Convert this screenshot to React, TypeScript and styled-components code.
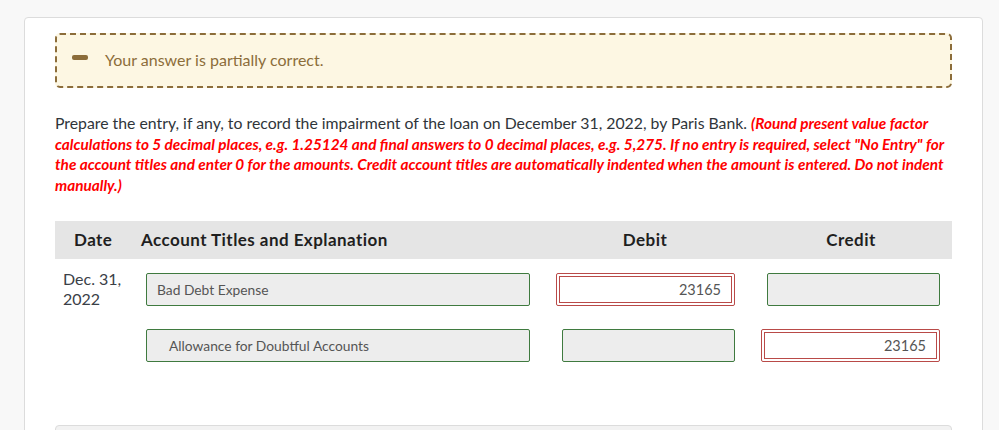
import React from "react";
import styled, { createGlobalStyle } from "styled-components";

const Global = createGlobalStyle`
  html, body { margin: 0; padding: 0; background: #f8f8f8; }
  body { font-family: Lato, "Open Sans", "Liberation Sans", sans-serif; color: #333; }
  * { box-sizing: border-box; }
`;

const Page = styled.div`
  padding: 17px 16px 0 24px;
  height: 430px;
  overflow: hidden;
`;

const Card = styled.div`
  background: #fff;
  border: 1px solid #dcdcdc;
  border-radius: 4px;
  padding: 15px 30px 0 30px;
  min-height: 500px;
`;

const Alert = styled.div`
  display: flex;
  align-items: center;
  gap: 17px;
  height: 55px;
  padding: 0 15px 2px;
  background: #fdf7e3;
  border: 2px dashed #8c6d3a;
  border-radius: 5px;
  color: #8c6d3a;
  font-size: 16px;
`;

const MinusIcon = styled.span`
  display: block;
  width: 16px;
  height: 5px;
  border-radius: 2px;
  background: #8c6d3a;
  margin-top: -4px;
`;

const Prompt = styled.p`
  margin: 25px 0 0;
  font-size: 15.8px;
  line-height: 20.7px;
  color: #2f353a;
`;

const Note = styled.em`
  color: #ff0000;
  font-size: 15.35px;
  line-height: 1;
  font-weight: 700;
  font-style: italic;
`;

const Table = styled.div`
  margin-top: 25px;
  display: grid;
  grid-template-columns: 86px 399px 210px 202px;
`;

const HeadCell = styled.div<{ $align?: string; $pad?: string }>`
  background: #e5e5e5;
  height: 38px;
  display: flex;
  align-items: center;
  justify-content: ${(p) => p.$align || "center"};
  padding: ${(p) => p.$pad || "0"};
  font-size: 17px;
  letter-spacing: 0.45px;
  font-weight: 700;
  color: #1f1f1f;
`;

const DateCell = styled.div`
  padding: 10px 0 0 8px;
  font-size: 16px;
  line-height: 20px;
  color: #3a4047;
`;

const Cell = styled.div<{ $top: number; $padLeft?: number; $padRight?: number }>`
  display: flex;
  justify-content: ${(p) => (p.$padRight !== undefined ? "flex-end" : "flex-start")};
  padding-top: ${(p) => p.$top}px;
  padding-left: ${(p) => p.$padLeft ?? 0}px;
  padding-right: ${(p) => p.$padRight ?? 0}px;
`;

const Field = styled.div<{ $width: number; $indent?: number }>`
  width: ${(p) => p.$width}px;
  height: 33px;
  display: flex;
  align-items: center;
  padding-left: ${(p) => p.$indent ?? 10}px;
  background: #ededed;
  border: 1px solid #3f7a3f;
  border-radius: 2px;
  font-size: 13.8px;
  color: #555;
`;

const WrongOuter = styled.div<{ $width: number }>`
  width: ${(p) => p.$width}px;
  height: 33px;
  padding: 2px;
  border: 1px solid #b94a48;
  border-radius: 2px;
  background: #fff;
`;

const WrongInner = styled.div`
  height: 100%;
  border: 1px solid #b94a48;
  display: flex;
  align-items: center;
  justify-content: flex-end;
  padding-right: 10px;
  font-size: 14.5px;
  color: #555;
`;

const Spacer = styled.div``;

const NextBox = styled.div`
  margin-top: 63px;
  height: 40px;
  background: #f2f2f2;
  border: 1px solid #dcdcdc;
  border-radius: 4px 4px 0 0;
`;

export default function App() {
  return (
    <>
      <Global />
      <Page>
        <Card>
          <Alert>
            <MinusIcon />
            <span>Your answer is partially correct.</span>
          </Alert>
          <Prompt>
            Prepare the entry, if any, to record the impairment of the loan on December 31, 2022, by Paris Bank.{" "}
            <Note>
              (Round present value factor calculations to 5 decimal places, e.g. 1.25124 and final answers to 0 decimal
              places, e.g. 5,275. If no entry is required, select "No Entry" for the account titles and enter 0 for the
              amounts. Credit account titles are automatically indented when the amount is entered. Do not indent
              manually.)
            </Note>
          </Prompt>
          <Table>
            <HeadCell $align="flex-start" $pad="0 0 0 19px">
              Date
            </HeadCell>
            <HeadCell $align="flex-start">Account Titles and Explanation</HeadCell>
            <HeadCell>Debit</HeadCell>
            <HeadCell>Credit</HeadCell>

            <DateCell>
              Dec. 31,
              <br />
              2022
            </DateCell>
            <Cell $top={14} $padLeft={5}>
              <Field $width={384}>Bad Debt Expense</Field>
            </Cell>
            <Cell $top={14} $padRight={15}>
              <WrongOuter $width={179}>
                <WrongInner>23165</WrongInner>
              </WrongOuter>
            </Cell>
            <Cell $top={14} $padRight={12}>
              <Field $width={173} />
            </Cell>

            <Spacer />
            <Cell $top={20} $padLeft={5}>
              <Field $width={384} $indent={22}>
                Allowance for Doubtful Accounts
              </Field>
            </Cell>
            <Cell $top={20} $padRight={15}>
              <Field $width={173} />
            </Cell>
            <Cell $top={20} $padRight={12}>
              <WrongOuter $width={179}>
                <WrongInner>23165</WrongInner>
              </WrongOuter>
            </Cell>
          </Table>
          <NextBox />
        </Card>
      </Page>
    </>
  );
}
